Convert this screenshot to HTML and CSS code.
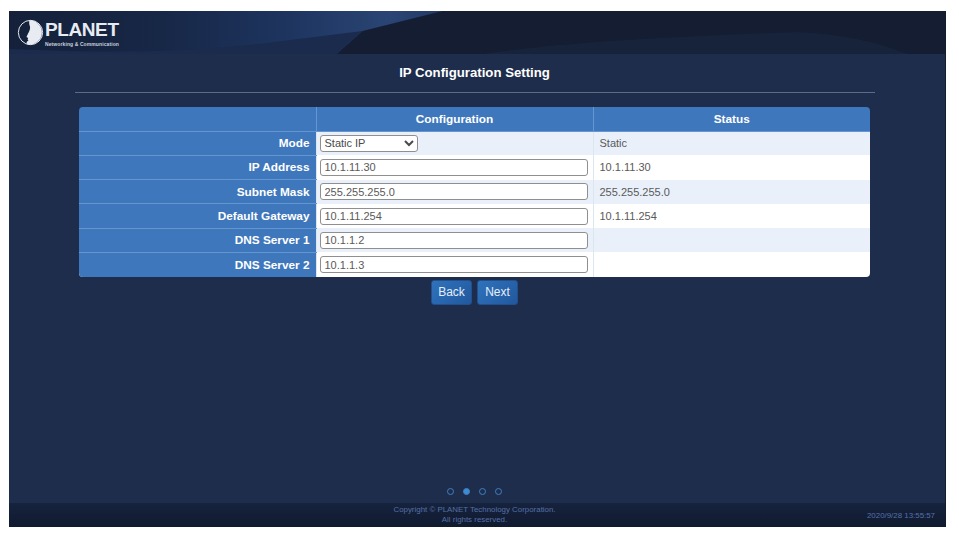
FILE: index.html
```html
<!DOCTYPE html>
<html lang="en">
<head>
<meta charset="utf-8">
<title>IP Configuration Setting</title>
<link rel="stylesheet" href="styles.css">
</head>
<body>
<div class="app">
  <header class="header">
    <svg class="header-art" viewBox="0 0 937 43" preserveAspectRatio="none" aria-hidden="true">
      <defs>
        <linearGradient id="sweep" x1="0" y1="0" x2="1" y2="0">
          <stop offset="0" stop-color="#15213a"/>
          <stop offset="0.35" stop-color="#172746"/>
          <stop offset="0.65" stop-color="#1e3560"/>
          <stop offset="0.88" stop-color="#2a4574"/>
          <stop offset="1" stop-color="#223a66"/>
        </linearGradient>
      </defs>
      <path d="M0 0H434L354 20L328 43H0Z" fill="url(#sweep)"/>
      <path d="M0 43V38C100 42 170 42 250 33L354 20L328 43Z" fill="#1a2b4d"/>
      <path d="M475 43C540 33 640 26 790 21C850 24 880 36 900 43Z" fill="#1a2a44" opacity="0.5"/>
    </svg>
    <div class="logo">
      <svg class="logo-mark" viewBox="0 0 28 28" aria-hidden="true">
        <circle cx="14" cy="14" r="12.6" fill="none" stroke="#e8ecf2" stroke-width="1"/>
        <path d="M13 1.4A12.6 12.6 0 1 1 11 26.4C9 25 10 23 12 22.5C10.6 21.5 11.2 20.4 11.6 19.6L9.8 18.6L11.6 14.8C13 12 14.2 9.6 13.2 7C12.6 5 12.3 3 13 1.4Z" fill="#e8ecf2"/>
      </svg>
      <div class="logo-text">
        <span class="logo-name">PLANET</span>
        <span class="logo-tag">Networking &amp; Communication</span>
      </div>
    </div>
  </header>

  <main class="main">
    <h1 class="title">IP Configuration Setting</h1>
    <hr class="rule">
    <div class="table-wrap">
      <table class="config">
        <thead>
          <tr><th class="label"></th><th>Configuration</th><th>Status</th></tr>
        </thead>
        <tbody>
          <tr class="alt">
            <th class="label">Mode</th>
            <td class="cfg"><select class="mode"><option>Static IP</option></select></td>
            <td>Static</td>
          </tr>
          <tr>
            <th class="label">IP Address</th>
            <td class="cfg"><input class="field" type="text" value="10.1.11.30"></td>
            <td>10.1.11.30</td>
          </tr>
          <tr class="alt">
            <th class="label">Subnet Mask</th>
            <td class="cfg"><input class="field" type="text" value="255.255.255.0"></td>
            <td>255.255.255.0</td>
          </tr>
          <tr>
            <th class="label">Default Gateway</th>
            <td class="cfg"><input class="field" type="text" value="10.1.11.254"></td>
            <td>10.1.11.254</td>
          </tr>
          <tr class="alt">
            <th class="label">DNS Server 1</th>
            <td class="cfg"><input class="field" type="text" value="10.1.1.2"></td>
            <td></td>
          </tr>
          <tr>
            <th class="label">DNS Server 2</th>
            <td class="cfg"><input class="field" type="text" value="10.1.1.3"></td>
            <td></td>
          </tr>
        </tbody>
      </table>
    </div>
    <div class="actions">
      <button class="btn" type="button">Back</button>
      <button class="btn" type="button">Next</button>
    </div>
    <div class="dots">
      <span class="dot"></span>
      <span class="dot on"></span>
      <span class="dot"></span>
      <span class="dot"></span>
    </div>
  </main>

  <footer class="footer">
    <div class="copy">Copyright © PLANET Technology Corporation.<br>All rights reserved.</div>
    <div class="clock">2020/9/28 13:55:57</div>
  </footer>
</div>
</body>
</html>
```

FILE: styles.css
```css
* { box-sizing: border-box; }

html, body {
  margin: 0;
  height: 100%;
  background: #fff;
}

body {
  padding: 11px 13px 13px 9px;
  font-family: "Liberation Sans", Arial, sans-serif;
}

.app {
  display: flex;
  flex-direction: column;
  height: 516px;
  background: #1e2d4b;
  border-right: 1px solid #141c2c;
  overflow: hidden;
}

.header {
  position: relative;
  height: 43px;
  flex: none;
  background: #141d31;
  display: flex;
  align-items: center;
  padding-left: 8px;
}

.header-art {
  position: absolute;
  inset: 0;
  width: 100%;
  height: 100%;
}

.logo {
  position: relative;
  display: flex;
  align-items: center;
  gap: 1px;
}

.logo-mark {
  width: 27px;
  height: 27px;
  flex: none;
}

.logo-text {
  display: flex;
  flex-direction: column;
  width: 74px;
}

.logo-name {
  color: #e8ecf2;
  font-size: 19px;
  line-height: 22px;
  font-weight: 700;
  letter-spacing: -0.4px;
}

.logo-tag {
  color: #c9d0dc;
  font-size: 5px;
  line-height: 6px;
  font-weight: 700;
  letter-spacing: 0.1px;
  white-space: nowrap;
}

.main {
  flex: 1;
  display: flex;
  flex-direction: column;
  align-items: center;
  min-height: 0;
  padding-right: 5px;
}

.title {
  margin: 11px 0 0;
  color: #fff;
  font-size: 13.2px;
  line-height: 16px;
  font-weight: 700;
}

.rule {
  width: 800px;
  margin: 11px 0 0;
  border: 0;
  border-top: 1px solid #5d6b84;
}

.table-wrap {
  width: 791px;
  margin-top: 14px;
  border-radius: 4px;
  overflow: hidden;
}

.config {
  width: 100%;
  border-collapse: collapse;
  table-layout: fixed;
  font-size: 11px;
}

.config thead th {
  height: 24px;
  width: 277px;
  color: #fff;
  background: #3f77bc;
  font-size: 11.8px;
  font-weight: 700;
  border-left: 1px solid #6496d2;
  border-bottom: 1px solid #6496d2;
}

.config thead th.label {
  width: 237px;
  border-left: 0;
}

.config tbody tr {
  height: 24.3px;
  background: #fff;
}

.config tbody tr.alt {
  background: #e9f0fa;
}

.config th.label {
  background: #3f77bc;
  color: #fff;
  text-align: right;
  padding: 0 6px 0 0;
  font-size: 11.8px;
  font-weight: 700;
  border-bottom: 1px solid #6496d2;
}

.config tbody tr:last-child th.label {
  border-bottom: 0;
}

.config td {
  padding: 0 0 0 6px;
  color: #5a5a5a;
  font-size: 11px;
  border-left: 1px solid #dde5f1;
}

.config td.cfg {
  padding-left: 3px;
}

.field {
  display: block;
  width: 268px;
  height: 17px;
  padding: 0 4px;
  border: 1px solid #8f8f8f;
  border-radius: 3px;
  background: #fff;
  color: #5a5a5a;
  font: 11px "Liberation Sans", Arial, sans-serif;
}

.mode {
  display: block;
  width: 98px;
  height: 17px;
  padding: 0;
  border: 1px solid #8f8f8f;
  border-radius: 3px;
  background: #fff;
  color: #4a4a4a;
  font: 11px "Liberation Sans", Arial, sans-serif;
}

.actions {
  display: flex;
  gap: 5px;
  margin-top: 3px;
}

.btn {
  height: 25px;
  width: 41px;
  padding: 0;
  border: 1px solid #22508f;
  border-radius: 3px;
  background: linear-gradient(135deg, #2f73bb, #21589f);
  color: #e6eefa;
  font: 12px "Liberation Sans", Arial, sans-serif;
}

.dots {
  display: flex;
  gap: 9px;
  margin-top: auto;
  margin-bottom: 8px;
}

.dot {
  width: 7px;
  height: 7px;
  border-radius: 50%;
  border: 1px solid #3f80c4;
}

.dot.on {
  background: #3f8ad4;
}

.footer {
  position: relative;
  flex: none;
  height: 24px;
  background: linear-gradient(#16233e, #101a2f);
  display: flex;
  justify-content: center;
  color: #5570a6;
  font-size: 7.9px;
  line-height: 10px;
  padding: 2px 5px 0 0;
}

.copy {
  text-align: center;
}

.clock {
  position: absolute;
  right: 10px;
  bottom: 6px;
  color: #5570a6;
}
```
